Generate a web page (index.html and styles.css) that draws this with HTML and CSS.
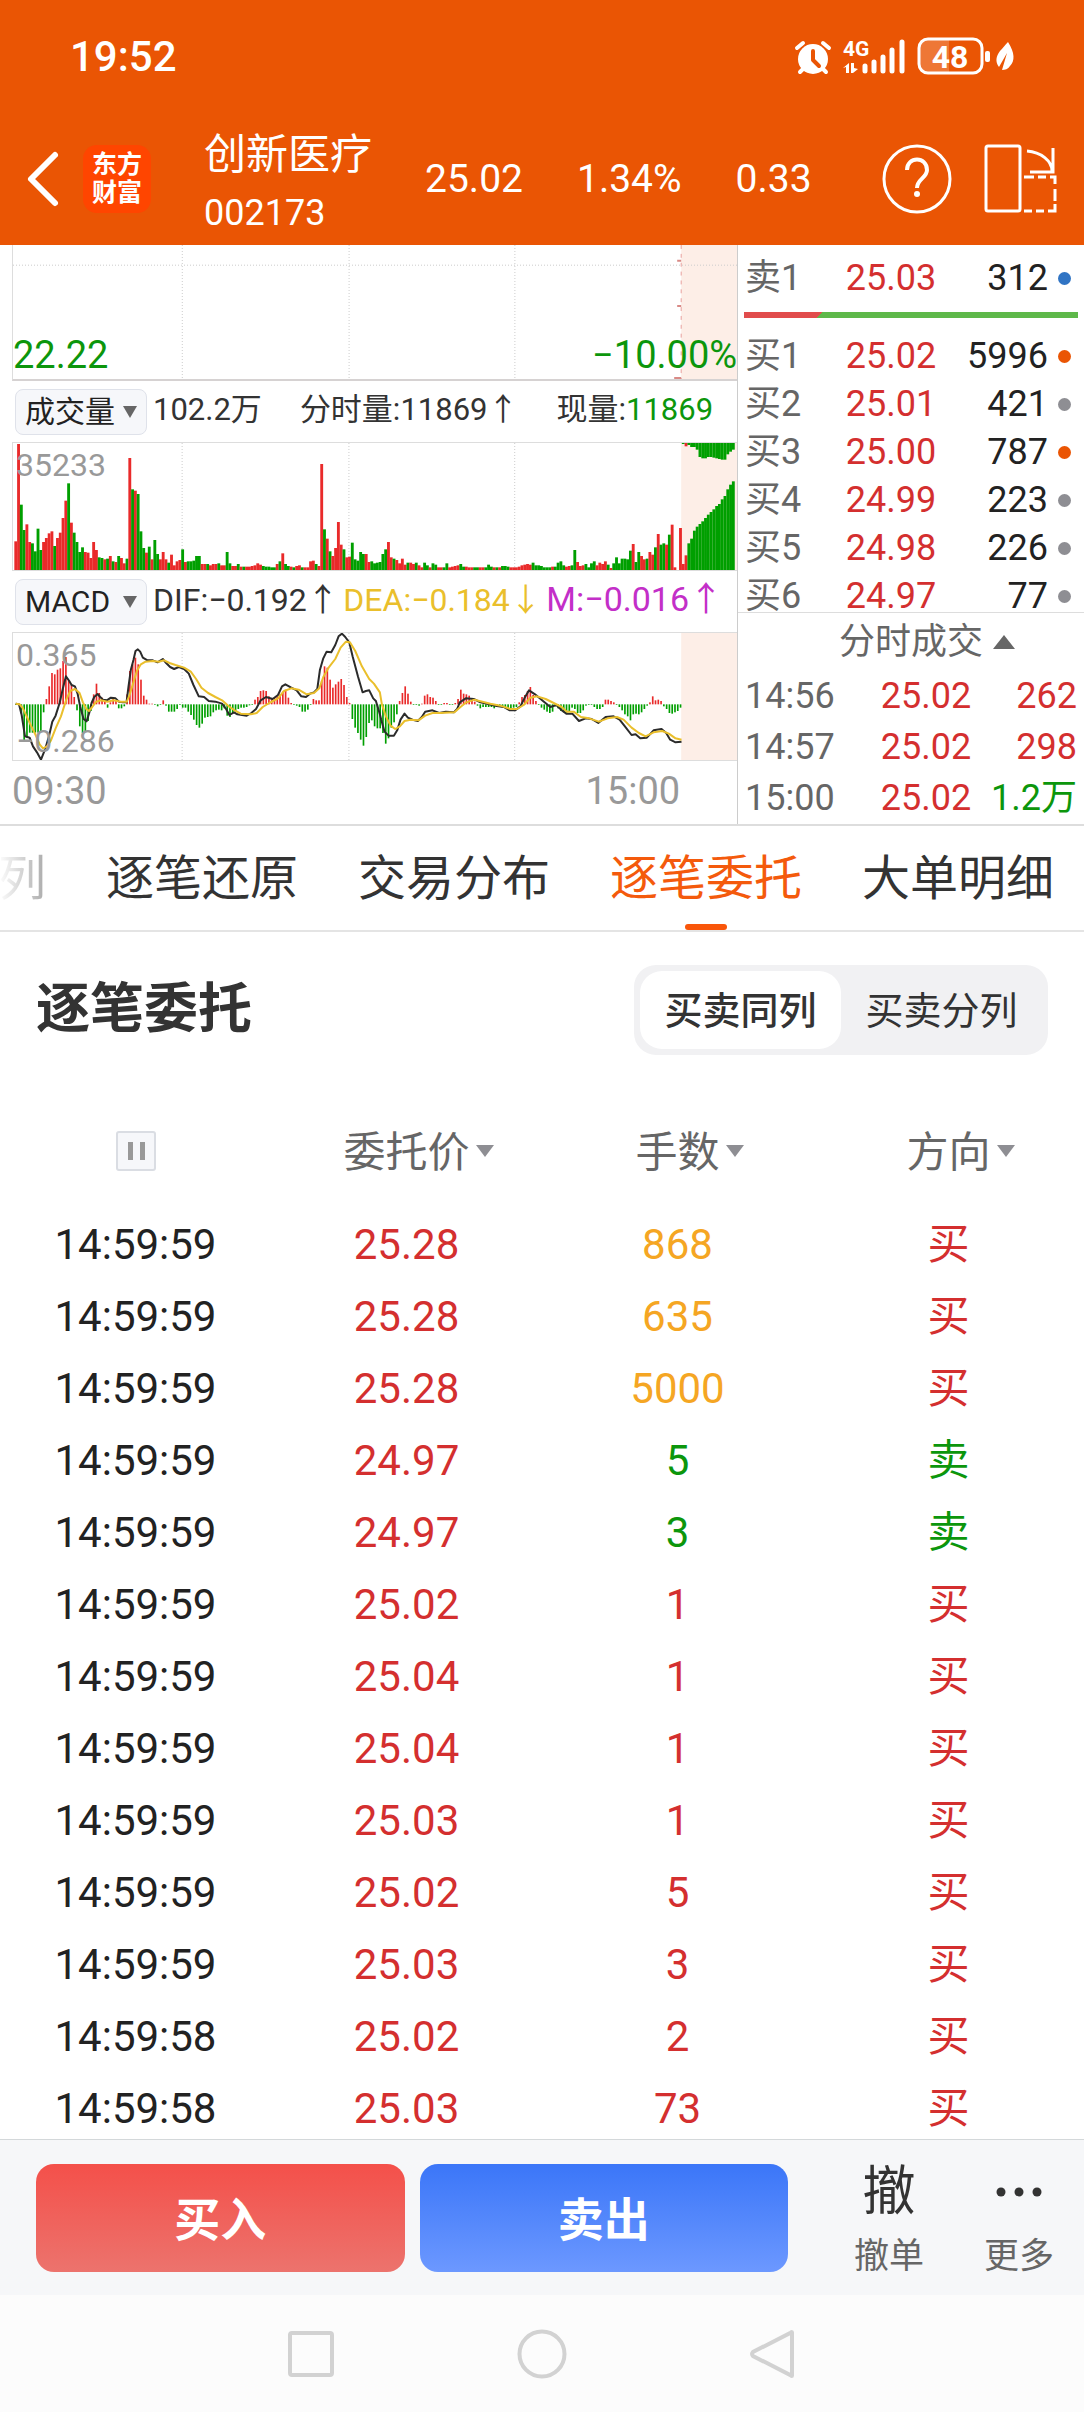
FILE: index.html
```html
<!DOCTYPE html>
<html lang="zh-CN">
<head>
    <meta charset="UTF-8">
    <meta name="viewport" content="width=device-width, initial-scale=1.0">
    <title>创新医疗 002173</title>
    <link rel="stylesheet" href="styles.css">
</head>
<body>
    <header class="header">
        <div class="status-bar">
            <span class="clock">19:52</span>
            <svg class="status-icons" viewBox="790 30 230 50" fill="#fff">
                <!-- alarm -->
                <circle cx="813" cy="58" r="15"/>
                <path d="M797 47l6-5M829 47l-6-5M800 71l4-4M826 71l-4-4" stroke="#fff" stroke-width="4" stroke-linecap="round"/>
                <path d="M813 50v9l6 6" fill="none" stroke="#ea5504" stroke-width="4" stroke-linecap="round" stroke-linejoin="round"/>
                <!-- signal -->
                <text x="843" y="55" font-size="21" font-weight="700">4G</text>
                <path d="M843 67l6-5v10h-3v-6zM851 62h3v5l4 1-5 4h-2z"/>
                <path d="M865 65v5M874 61v9M883 56v14M892 49v21M902 41v29" stroke="#fff" stroke-width="5" stroke-linecap="round"/>
                <!-- battery -->
                <path d="M926 38h23v34h-23a7 7 0 0 1-7-7v-20a7 7 0 0 1 7-7z" fill-opacity=".2"/>
                <rect x="919" y="38" width="63" height="34" rx="9" fill="none" stroke="#fff" stroke-width="3"/>
                <rect x="985" y="50" width="5" height="11" rx="2"/>
                <text x="950" y="67" font-size="32" font-weight="700" text-anchor="middle">48</text>
                <!-- leaf -->
                <path d="M1008 41c7 11 7 19 2 24-2 3-5 4-8 4l5-17-8 14c-4-5-3-11 1-16 3-3 5-6 8-9z"/>
            </svg>
        </div>
        <div class="title-bar">
            <a href="#" class="back" aria-label="返回">
                <svg width="34" height="58" viewBox="0 0 34 58" fill="none" stroke="#fff" stroke-width="6" stroke-linecap="round" stroke-linejoin="round"><path d="M29 5L5 29l24 24"/></svg>
            </a>
            <div class="logo">东方<br>财富</div>
            <div class="stock">
                <h1>创新医疗</h1>
                <span>002173</span>
            </div>
            <div class="quote">
                <span>25.02</span>
                <span>1.34%</span>
                <span>0.33</span>
            </div>
            <button class="icon-btn" aria-label="帮助">
                <svg width="70" height="72" viewBox="0 0 70 72" fill="none" stroke="#fff" stroke-width="3">
                    <circle cx="35" cy="36" r="33"/>
                    <path d="M25 27c0-14 20-14 20 0 0 8-10 9-10 18" stroke-width="4"/>
                    <circle cx="35" cy="51" r="3" fill="#fff" stroke="none"/>
                </svg>
            </button>
            <button class="icon-btn" aria-label="横屏">
                <svg width="74" height="70" viewBox="0 0 74 70" fill="none" stroke="#fff" stroke-width="3">
                    <rect x="2" y="2" width="34" height="65" rx="2"/>
                    <path d="M43 7c14 1 25 10 25 20M69 4v24H46"/>
                    <path d="M40 33h10M54 33h8M66 33h5v7M71 45v12M71 60v7h-7M60 67h-8M48 67h-8"/>
                </svg>
            </button>
        </div>
    </header>

    <main class="market">
        <section class="charts">
            <div class="chart price-chart">
                <svg viewBox="0 0 725 136" preserveAspectRatio="none">
                    <rect class="auction" x="669" y="0" width="56" height="136"/>
                    <path class="grid" d="M0 20.5H725M169.500 0V136M336.500 0V136M502.500 0V136"/>
                    <path d="M669 0V136" stroke="#e9a09c" stroke-dasharray="4 5" fill="none"/>
                    <path d="M665 16h4M665 62h4M662 135h7" stroke="#d98a86" stroke-width="2"/>
                </svg>
                <span class="low">22.22</span>
                <span class="pct">−10.00%</span>
            </div>

            <div class="indicator">
                <label class="picker">
                    <select aria-label="指标一"><option>成交量</option></select>
                </label>
                <div class="values volume-values">
                    <span>102.2万</span>
                    <span>分时量:11869↑</span>
                    <span>现量:<b class="green">11869</b></span>
                </div>
            </div>
            <div class="chart">
                <svg id="volume" viewBox="0 0 2175 381" preserveAspectRatio="none">
                    <rect class="auction" x="2007" y="0" width="168" height="381"/>
                    <path class="grid" d="M508 0V381M1009 0V381M1507 0V381"/>
                </svg>
                <span class="mark top">35233</span>
            </div>

            <div class="indicator">
                <label class="picker">
                    <select aria-label="指标二"><option>MACD</option></select>
                </label>
                <div class="values">
                    <span>DIF:−0.192↑</span>
                    <span class="yellow">DEA:−0.184↓</span>
                    <span class="purple">M:−0.016↑</span>
                </div>
            </div>
            <div class="chart">
                <svg id="macd" viewBox="36 190 2175 381" preserveAspectRatio="none">
                    <rect class="auction" x="2043" y="190" width="168" height="381"/>
                    <path class="grid" d="M544 190V571M1045 190V571M1543 190V571"/>
                </svg>
                <span class="mark top">0.365</span>
                <span class="mark bottom">−0.286</span>
            </div>
            <div class="axis">
                <span>09:30</span>
                <span>15:00</span>
            </div>
        </section>

        <aside class="book">
            <table class="orders sell">
                <tr><td>卖1</td><td class="red">25.03</td><td>312</td><td><i class="dot blue"></i></td></tr>
            </table>
            <div class="ratio"></div>
            <div class="bids">
                <table class="orders">
                    <tr><td>买1</td><td class="red">25.02</td><td>5996</td><td><i class="dot orange"></i></td></tr>
                    <tr><td>买2</td><td class="red">25.01</td><td>421</td><td><i class="dot"></i></td></tr>
                    <tr><td>买3</td><td class="red">25.00</td><td>787</td><td><i class="dot orange"></i></td></tr>
                    <tr><td>买4</td><td class="red">24.99</td><td>223</td><td><i class="dot"></i></td></tr>
                    <tr><td>买5</td><td class="red">24.98</td><td>226</td><td><i class="dot"></i></td></tr>
                    <tr><td>买6</td><td class="red">24.97</td><td>77</td><td><i class="dot"></i></td></tr>
                </table>
            </div>
            <button class="ticks-toggle">分时成交</button>
            <table class="ticks">
                <tr><td>14:56</td><td class="red">25.02</td><td class="red">262</td></tr>
                <tr><td>14:57</td><td class="red">25.02</td><td class="red">298</td></tr>
                <tr><td>15:00</td><td class="red">25.02</td><td class="green">1.2万</td></tr>
            </table>
        </aside>
    </main>

    <nav class="tabs">
        <a href="#" class="faded">列</a>
        <a href="#">逐笔还原</a>
        <a href="#">交易分布</a>
        <a href="#" class="active">逐笔委托</a>
        <a href="#">大单明细</a>
    </nav>

    <section class="detail">
        <div class="detail-head">
            <h2>逐笔委托</h2>
            <div class="switch">
                <button class="on">买卖同列</button>
                <button>买卖分列</button>
            </div>
        </div>
        <table class="list">
            <thead>
                <tr>
                    <th><button class="pause" aria-label="暂停"></button></th>
                    <th><button class="sort">委托价</button></th>
                    <th><button class="sort">手数</button></th>
                    <th><button class="sort">方向</button></th>
                </tr>
            </thead>
            <tbody>
                <tr><td>14:59:59</td><td class="red">25.28</td><td class="big">868</td><td class="red">买</td></tr>
                <tr><td>14:59:59</td><td class="red">25.28</td><td class="big">635</td><td class="red">买</td></tr>
                <tr><td>14:59:59</td><td class="red">25.28</td><td class="big">5000</td><td class="red">买</td></tr>
                <tr><td>14:59:59</td><td class="red">24.97</td><td class="green">5</td><td class="green">卖</td></tr>
                <tr><td>14:59:59</td><td class="red">24.97</td><td class="green">3</td><td class="green">卖</td></tr>
                <tr><td>14:59:59</td><td class="red">25.02</td><td class="red">1</td><td class="red">买</td></tr>
                <tr><td>14:59:59</td><td class="red">25.04</td><td class="red">1</td><td class="red">买</td></tr>
                <tr><td>14:59:59</td><td class="red">25.04</td><td class="red">1</td><td class="red">买</td></tr>
                <tr><td>14:59:59</td><td class="red">25.03</td><td class="red">1</td><td class="red">买</td></tr>
                <tr><td>14:59:59</td><td class="red">25.02</td><td class="red">5</td><td class="red">买</td></tr>
                <tr><td>14:59:59</td><td class="red">25.03</td><td class="red">3</td><td class="red">买</td></tr>
                <tr><td>14:59:58</td><td class="red">25.02</td><td class="red">2</td><td class="red">买</td></tr>
                <tr><td>14:59:58</td><td class="red">25.03</td><td class="red">73</td><td class="red">买</td></tr>
            </tbody>
        </table>
    </section>

    <footer class="trade-bar">
        <div class="trade-btns">
            <button class="buy">买入</button>
            <button class="sell-btn">卖出</button>
        </div>
        <button class="tool"><span class="tool-icon">撤</span>撤单</button>
        <button class="tool">
            <span class="tool-icon"><svg width="46" height="10" viewBox="0 0 46 10" fill="#333"><circle cx="5" cy="5" r="4.500"/><circle cx="23" cy="5" r="4.500"/><circle cx="41" cy="5" r="4.500"/></svg></span>更多
        </button>
    </footer>
    <div class="sys-nav">
        <svg width="50" height="50" viewBox="0 0 50 50"><rect x="4" y="4" width="42" height="42" rx="2"/></svg>
        <svg width="50" height="50" viewBox="0 0 50 50"><circle cx="25" cy="25" r="22.500"/></svg>
        <svg width="50" height="50" viewBox="0 0 50 50"><path d="M44 3.500v43q0 1-1 0L5 27q-2-2 0-4L43 3.500q1-1 1 0z"/></svg>
    </div>

    <script src="script.js"></script>
</body>
</html>
```

FILE: styles.css
```css
* {
    box-sizing: border-box;
}
body {
    margin: 0;
    height: 100vh;
    display: flex;
    flex-direction: column;
    overflow: hidden;
    font-family: Roboto, "Noto Sans CJK SC", sans-serif;
    color: #333;
    background-color: #fff;
}
button {
    font: inherit;
    color: inherit;
    border: 0;
    padding: 0;
    background: none;
}
a {
    color: inherit;
    text-decoration: none;
}
table {
    border-collapse: collapse;
    table-layout: fixed;
    width: 100%;
}
td, th {
    padding: 0;
    font-weight: 400;
}
svg {
    display: block;
}
.red {
    color: #d42f2f;
}
.green {
    color: #0c960c;
    font-weight: 400;
}
.yellow {
    color: #eabf2c;
}
.purple {
    color: #c32fc8;
    font-size: 34px;
}

/* header */
.header {
    flex: none;
    color: #fff;
    background-color: #ea5504;
}
.status-bar {
    display: flex;
    justify-content: space-between;
    align-items: center;
    height: 112px;
    padding: 0 64px 0 70px;
}
.clock {
    font-size: 42px;
    font-weight: 500;
}
.status-icons {
    width: 230px;
    height: 50px;
}
.title-bar {
    display: flex;
    align-items: center;
    height: 133px;
    padding: 0 26px;
}
.logo {
    width: 68px;
    height: 68px;
    margin-left: 23px;
    padding-top: 6px;
    border-radius: 14px;
    background-color: #ff4500;
    font-size: 25px;
    font-weight: 700;
    line-height: 28px;
    text-align: center;
}
.stock {
    margin-left: 53px;
    padding-top: 10px;
    font-size: 36px;
    line-height: 58px;
}
.stock h1 {
    margin: 0;
    font-size: 42px;
    font-weight: 400;
}
.stock span {
    display: block;
}
.quote {
    flex: 1;
    display: flex;
    gap: 54px;
    margin-left: 53px;
    font-size: 39px;
}
.icon-btn + .icon-btn {
    margin-left: 32px;
}

/* charts */
.market {
    flex: none;
    display: flex;
    border-bottom: 2px solid #ddd;
}
.charts {
    flex: none;
    width: 68%;
    padding-left: 12px;
}
.chart {
    position: relative;
    border-left: 1px solid #ddd;
    border-top: 1px solid #ddd;
    border-bottom: 1px solid #ddd;
}
.chart svg {
    width: 100%;
    height: 127px;
}
.price-chart {
    border-top: 0;
    border-bottom: 2px solid #d6d2d2;
    font-size: 38px;
    line-height: 48px;
    color: #0c960c;
}
.price-chart svg {
    height: 134px;
}
.low, .pct, .mark {
    position: absolute;
}
.low {
    left: 0;
    bottom: 0;
}
.pct {
    right: 0;
    bottom: 0;
}
.mark {
    left: 3px;
    font-size: 32px;
    line-height: 38px;
    color: #999;
}
.top {
    top: 3px;
}
.bottom {
    bottom: 0;
}
.auction {
    fill: #fdeee7;
}
.grid {
    fill: none;
    stroke: #ccc;
    stroke-width: 1;
    stroke-dasharray: 1 2;
    vector-effect: non-scaling-stroke;
}
.line {
    fill: none;
    stroke-width: 2;
    stroke-linejoin: round;
    vector-effect: non-scaling-stroke;
}
.indicator {
    display: flex;
    align-items: center;
    height: 61px;
    padding-left: 3px;
}
.picker {
    position: relative;
    width: 132px;
    height: 46px;
    border: 1px solid #dfe2ea;
    border-radius: 8px;
    background-color: #f6f7fa;
}
.picker select {
    appearance: none;
    width: 100%;
    height: 100%;
    padding: 0 0 0 9px;
    border: 0;
    background: none;
    font-family: inherit;
    font-size: 30px;
    color: #222;
}
.picker::after {
    content: "";
    position: absolute;
    right: 9px;
    top: 16px;
    border: 7px solid transparent;
    border-top: 12px solid #666;
    border-bottom: 0;
    pointer-events: none;
}
.values {
    flex: 1;
    display: flex;
    align-items: baseline;
    justify-content: space-between;
    padding: 0 14px 4px 6px;
    font-size: 32px;
    line-height: 40px;
    white-space: nowrap;
}
.volume-values {
    justify-content: flex-start;
    gap: 38px;
    font-size: 31px;
}
.axis {
    display: flex;
    justify-content: space-between;
    height: 58px;
    padding-right: 57px;
    font-size: 38px;
    line-height: 60px;
    color: #999;
}

/* order book */
.book {
    flex: 1;
    border-left: 1px solid #ccc;
    font-size: 36px;
}
.orders td, .ticks td {
    height: 48px;
    line-height: 48px;
    text-align: right;
    color: #222;
}
.orders td:first-child, .ticks td:first-child {
    width: 80px;
    padding-left: 7px;
    text-align: left;
    color: #666;
}
.orders td:nth-child(2) {
    width: 118px;
}
.orders td:last-child {
    width: 36px;
}
.orders td.red, .ticks td.red {
    color: #d42f2f;
}
.ticks td.green {
    color: #0c960c;
}
.sell {
    margin-top: 9px;
}
.dot {
    display: block;
    width: 13px;
    height: 13px;
    margin-left: 10px;
    border-radius: 50%;
    background-color: #8e8e93;
}
.orange {
    background-color: #ea5504;
}
.blue {
    background-color: #3074c4;
}
.ratio {
    height: 6px;
    margin: 10px 6px 14px;
    background: linear-gradient(135deg, #e14c4c 23%, #5eb84a 23%);
}
.bids {
    height: 281px;
    border-bottom: 1px solid #ddd;
}
.ticks-toggle {
    display: flex;
    align-items: center;
    gap: 10px;
    margin: 0 auto;
    padding-left: 32px;
    height: 58px;
    line-height: 58px;
    color: #666;
}
.ticks-toggle::after {
    content: "";
    border: 11px solid transparent;
    border-bottom: 14px solid #666;
    border-top: 0;
}
.ticks td {
    height: 51px;
    line-height: 51px;
}
.ticks td:first-child {
    width: 110px;
}
.ticks td:nth-child(2) {
    width: 123px;
}
.ticks td:last-child {
    padding-right: 7px;
}

/* tabs */
.tabs {
    flex: none;
    display: flex;
    gap: 60px;
    height: 106px;
    border-bottom: 2px solid #e4e4e4;
    font-size: 48px;
    line-height: 106px;
    white-space: nowrap;
}
.faded {
    margin-left: -2px;
    color: transparent;
    background: linear-gradient(90deg, #fff, #aaa);
    background-clip: text;
}
.active {
    position: relative;
    color: #f45a0c;
}
.active::after {
    content: "";
    position: absolute;
    left: 50%;
    bottom: 0;
    width: 42px;
    height: 6px;
    margin-left: -21px;
    border-radius: 3px;
    background-color: #f9560a;
}

/* detail list */
.detail {
    flex: 1;
    min-height: 0;
    overflow: hidden;
}
.detail-head {
    display: flex;
    justify-content: space-between;
    align-items: center;
    padding: 33px 36px 38px;
}
.detail-head h2 {
    margin: 0;
    font-size: 54px;
    line-height: 90px;
}
.switch {
    display: flex;
    height: 90px;
    padding: 6px;
    border-radius: 22px;
    background-color: #f1f1f3;
    font-size: 38px;
}
.switch button {
    width: 201px;
    padding-bottom: 6px;
    border-radius: 22px;
}
.switch .on {
    background-color: #fff;
    font-weight: 500;
}
.list {
    font-size: 42px;
    text-align: center;
}
.list th {
    height: 116px;
    color: #666;
}
.list td {
    height: 72px;
    line-height: 72px;
}
.list td:first-child {
    color: #222;
}
.list .big {
    color: #f5a623;
}
.sort {
    position: relative;
    padding-bottom: 6px;
}
.sort::after {
    content: "";
    position: absolute;
    left: 100%;
    top: 50%;
    margin: -6px 0 0 6px;
    border: 9px solid transparent;
    border-top: 12px solid #8e8e93;
    border-bottom: 0;
}
.pause {
    display: block;
    width: 40px;
    height: 40px;
    margin: 0 auto;
    border: 2px solid #dadde3;
    border-radius: 3px;
    background: linear-gradient(#999, #999) 10px 9px / 5px 18px no-repeat,
        linear-gradient(#999, #999) 22px 9px / 5px 18px no-repeat, #f6f7fa;
}

/* bottom */
.trade-bar {
    flex: none;
    display: flex;
    align-items: center;
    height: 156px;
    padding-left: 36px;
    border-top: 1px solid #d4d8da;
    background-color: #f6f7f9;
}
.trade-btns {
    flex: 1;
    display: flex;
    gap: 15px;
    margin-right: 36px;
}
.trade-btns button {
    flex: 1;
    height: 108px;
    padding-bottom: 4px;
    border-radius: 18px;
    color: #fff;
    font-size: 46px;
    font-weight: 700;
}
.buy {
    background: linear-gradient(#f4504a, #ec736d);
}
.sell-btn {
    background: linear-gradient(#3b76f8, #6c98ff);
}
.tool {
    width: 130px;
    font-size: 35px;
    line-height: 52px;
    color: #666;
}
.tool-icon {
    display: flex;
    align-items: center;
    justify-content: center;
    height: 78px;
    font-size: 53px;
    color: #333;
}
.sys-nav {
    flex: none;
    display: flex;
    justify-content: center;
    align-items: center;
    gap: 181px;
    height: 117px;
    background-color: #fcfcfc;
}
.sys-nav svg {
    fill: none;
    stroke: #d2d2d2;
    stroke-width: 4;
}
```

FILE: script.js
```js
// one bar per minute, sign = direction (minus is green)
const volume = [86,378,-196,-120,137,84,-80,-56,-124,-60,84,96,110,116,-72,96,112,156,208,-260,142,-112,-84,-54,-68,54,52,36,84,60,
    -38,-36,32,-34,42,-26,24,-42,36,20,-34,336,-242,238,-228,-116,-66,52,-70,32,-90,-48,32,54,32,-22,46,14,26,30,
    -62,24,-26,-26,-28,-42,-42,18,18,-18,14,18,18,-20,14,14,-54,-20,12,12,-18,10,-10,10,10,12,14,20,16,-12,
    -10,-10,-8,-8,18,-26,50,-18,-12,10,-8,12,14,-8,8,8,26,28,-18,12,318,-122,94,-56,42,66,144,76,-62,38,
    40,-82,-32,-28,-54,-48,48,24,-26,-20,-22,-24,-48,-62,84,38,-34,30,20,34,16,-22,22,18,-22,14,8,-22,-14,8,
    -20,-16,8,8,-8,-20,8,10,12,14,-18,-10,10,8,8,-8,-8,8,8,-8,-16,-10,8,-8,8,-12,-12,-10,8,8,
    8,10,14,16,18,16,-22,-14,-14,-12,-8,-8,-8,10,-10,-22,-26,-14,10,12,-14,-60,24,12,14,-18,-8,-20,-26,14,
    22,18,26,-16,6,-20,-38,-20,-34,-34,-32,-58,78,-24,-54,42,32,-34,54,46,-68,108,-76,-80,76,-106,136,8,0,126,
    18,44,-80,-94,-118,-130,-138,-146,-156,-166,-174,-182,-192,-198,-212,-222,-242,-256,-266];

// unmatched volume of the closing auction, hangs from the top
const unmatched = [-3,10,-6,-12,-12,-20,-42,-46,-46,-42,-42,-44,-46,-48,-50,-50,-34,-26,-20];

const hist = [0,0,-28,-108,-100,-85,-85,-85,-85,-80,-24,16,54,94,90,104,108,130,142,72,58,22,-18,-66,-86,-80,-50,-20,30,62,
    34,20,10,-10,6,16,10,-12,-12,-6,30,100,120,140,120,74,26,14,2,2,0,-6,0,12,-4,-22,-22,-22,-14,-2,
    -10,-10,-22,-32,-46,-62,-70,-58,-40,-38,-36,-24,-18,-16,-18,-12,-34,-38,-26,-22,-14,-10,-10,-8,-3,0,14,22,40,42,
    40,24,16,20,24,30,38,44,20,4,0,-4,-8,-22,-22,-16,-2,16,12,12,70,114,110,74,50,60,68,76,58,22,
    4,-44,-70,-86,-106,-124,-98,-56,-48,-66,-72,-72,-86,-118,-102,-70,-54,-30,10,34,54,32,8,0,0,-4,2,26,30,22,
    20,10,0,0,4,4,0,0,4,16,44,32,30,26,16,8,-4,-12,-8,-8,-8,-8,-12,-8,-8,-10,-10,-12,-14,-10,
    -8,6,22,28,40,52,28,10,-2,-10,-16,-22,-26,-22,-6,-12,-20,-24,-28,-20,-10,-14,-26,-26,-18,-4,-2,0,-8,-14,
    -14,-8,14,14,10,6,-2,-8,-18,-30,-36,-48,-30,-28,-30,-24,-14,-4,6,24,12,14,10,-6,-14,-26,-28,-24,-20,-10];

const dif = "44,402 54,404 62,436 72,500 86,504 96,530 108,548 120,570 132,540 144,500 154,456 164,438 176,400 186,356 195,320 205,334 212,346 222,350 230,372 238,412 248,448 257,455 265,430 272,400 280,382 290,373 298,382 306,390 318,392 330,384 344,386 354,396 366,398 377,398 383,350 390,300 398,270 404,244 411,239 418,246 426,264 440,272 456,272 470,278 486,268 496,280 508,292 520,298 534,292 550,298 564,312 578,346 594,380 610,382 624,394 644,396 664,402 676,418 686,436 700,428 710,434 738,438 752,430 766,418 780,392 796,382 816,388 832,376 844,350 854,344 872,354 888,362 902,380 916,382 928,372 940,368 950,358 958,300 968,266 978,246 992,248 1004,226 1014,200 1024,192 1034,202 1046,218 1056,260 1072,320 1086,368 1096,364 1106,362 1118,386 1126,394 1138,434".split(" ");
const difTail = "0,364 12,390 22,412 32,450 42,486 54,498 70,498 80,482 90,450 102,432 112,444 126,450 142,454 154,442 164,426 186,422 206,430 226,426 250,428 260,418 268,398 286,386 310,388 330,398 350,402 374,408 400,412 418,422 434,422 450,410 462,386 476,362 494,374 518,394 540,412 558,406 572,420 588,432 606,432 626,454 646,446 664,448 684,460 706,442 730,440 748,450 764,470 784,496 796,494 810,506 830,504 850,482 874,478 888,490 900,510 916,518 934,516".split(" ");
const dea = "44,402 56,404 66,416 76,438 90,468 104,496 116,524 126,536 138,530 150,512 164,476 180,440 196,390 208,364 222,358 236,370 246,398 256,418 264,424 274,412 286,396 300,392 320,396 338,392 360,396 378,396 386,376 396,344 408,304 420,284 434,276 456,274 474,276 490,272 506,280 524,286 550,294 570,306 586,328 602,354 622,370 644,382 664,392 684,410 702,422 720,432 750,434 768,430 786,412 806,400 832,386 850,364 872,356 894,360 918,374 940,370 956,356 968,322 984,294 1004,268 1020,234 1036,216 1048,218 1064,244 1084,290 1106,328 1120,342 1138,368".split(" ");
const deaTail = "0,340 16,368 34,404 46,440 60,468 74,478 88,470 102,454 120,450 144,452 164,438 186,430 210,430 252,428 270,412 288,398 312,390 336,396 360,402 390,408 420,418 440,418 460,406 480,384 500,380 526,388 550,400 574,412 590,426 610,426 632,442 656,446 686,456 712,446 740,442 760,450 784,474 806,490 826,500 850,488 876,484 896,492 916,506 934,510".split(" ");

const RED = "#e92a2a";
const GREEN = "#009f00";
const PITCH = 8.354;

function add(svg, name, attrs) {
    const el = document.createElementNS("http://www.w3.org/2000/svg", name);
    for (const key in attrs) {
        el.setAttribute(key, attrs[key]);
    }
    svg.appendChild(el);
}

function bar(svg, x, y, width, height, value) {
    add(svg, "rect", { x: x, y: y, width: width, height: height, fill: value > 0 ? RED : GREEN });
}

// second half of the day, points are relative to x = 1110
function shift(points) {
    return points.map(function(p) {
        const xy = p.split(",");
        return (Number(xy[0]) + 1110) + "," + xy[1];
    }).filter(function(p) {
        return parseFloat(p) > 1138;
    });
}

const volumeSvg = document.getElementById("volume");
volume.forEach(function(v, i) {
    const h = Math.abs(v);
    bar(volumeSvg, 4 + i * PITCH, 381 - h, 8.6, h, v);
});
unmatched.forEach(function(v, i) {
    bar(volumeSvg, 4 + (i + 240) * PITCH, 0, 8.6, Math.abs(v), v);
});

const macdSvg = document.getElementById("macd");
hist.forEach(function(v, i) {
    const h = Math.max(Math.abs(v), 2);
    bar(macdSvg, 42 + i * PITCH, v > 0 ? 404 - h : 404, 5, h, v);
});
add(macdSvg, "polyline", { class: "line", stroke: "#2b2b2b", points: dif.concat(shift(difTail)).join(" ") });
add(macdSvg, "polyline", { class: "line", stroke: "#eabf2c", points: dea.concat(shift(deaTail)).join(" ") });
```
